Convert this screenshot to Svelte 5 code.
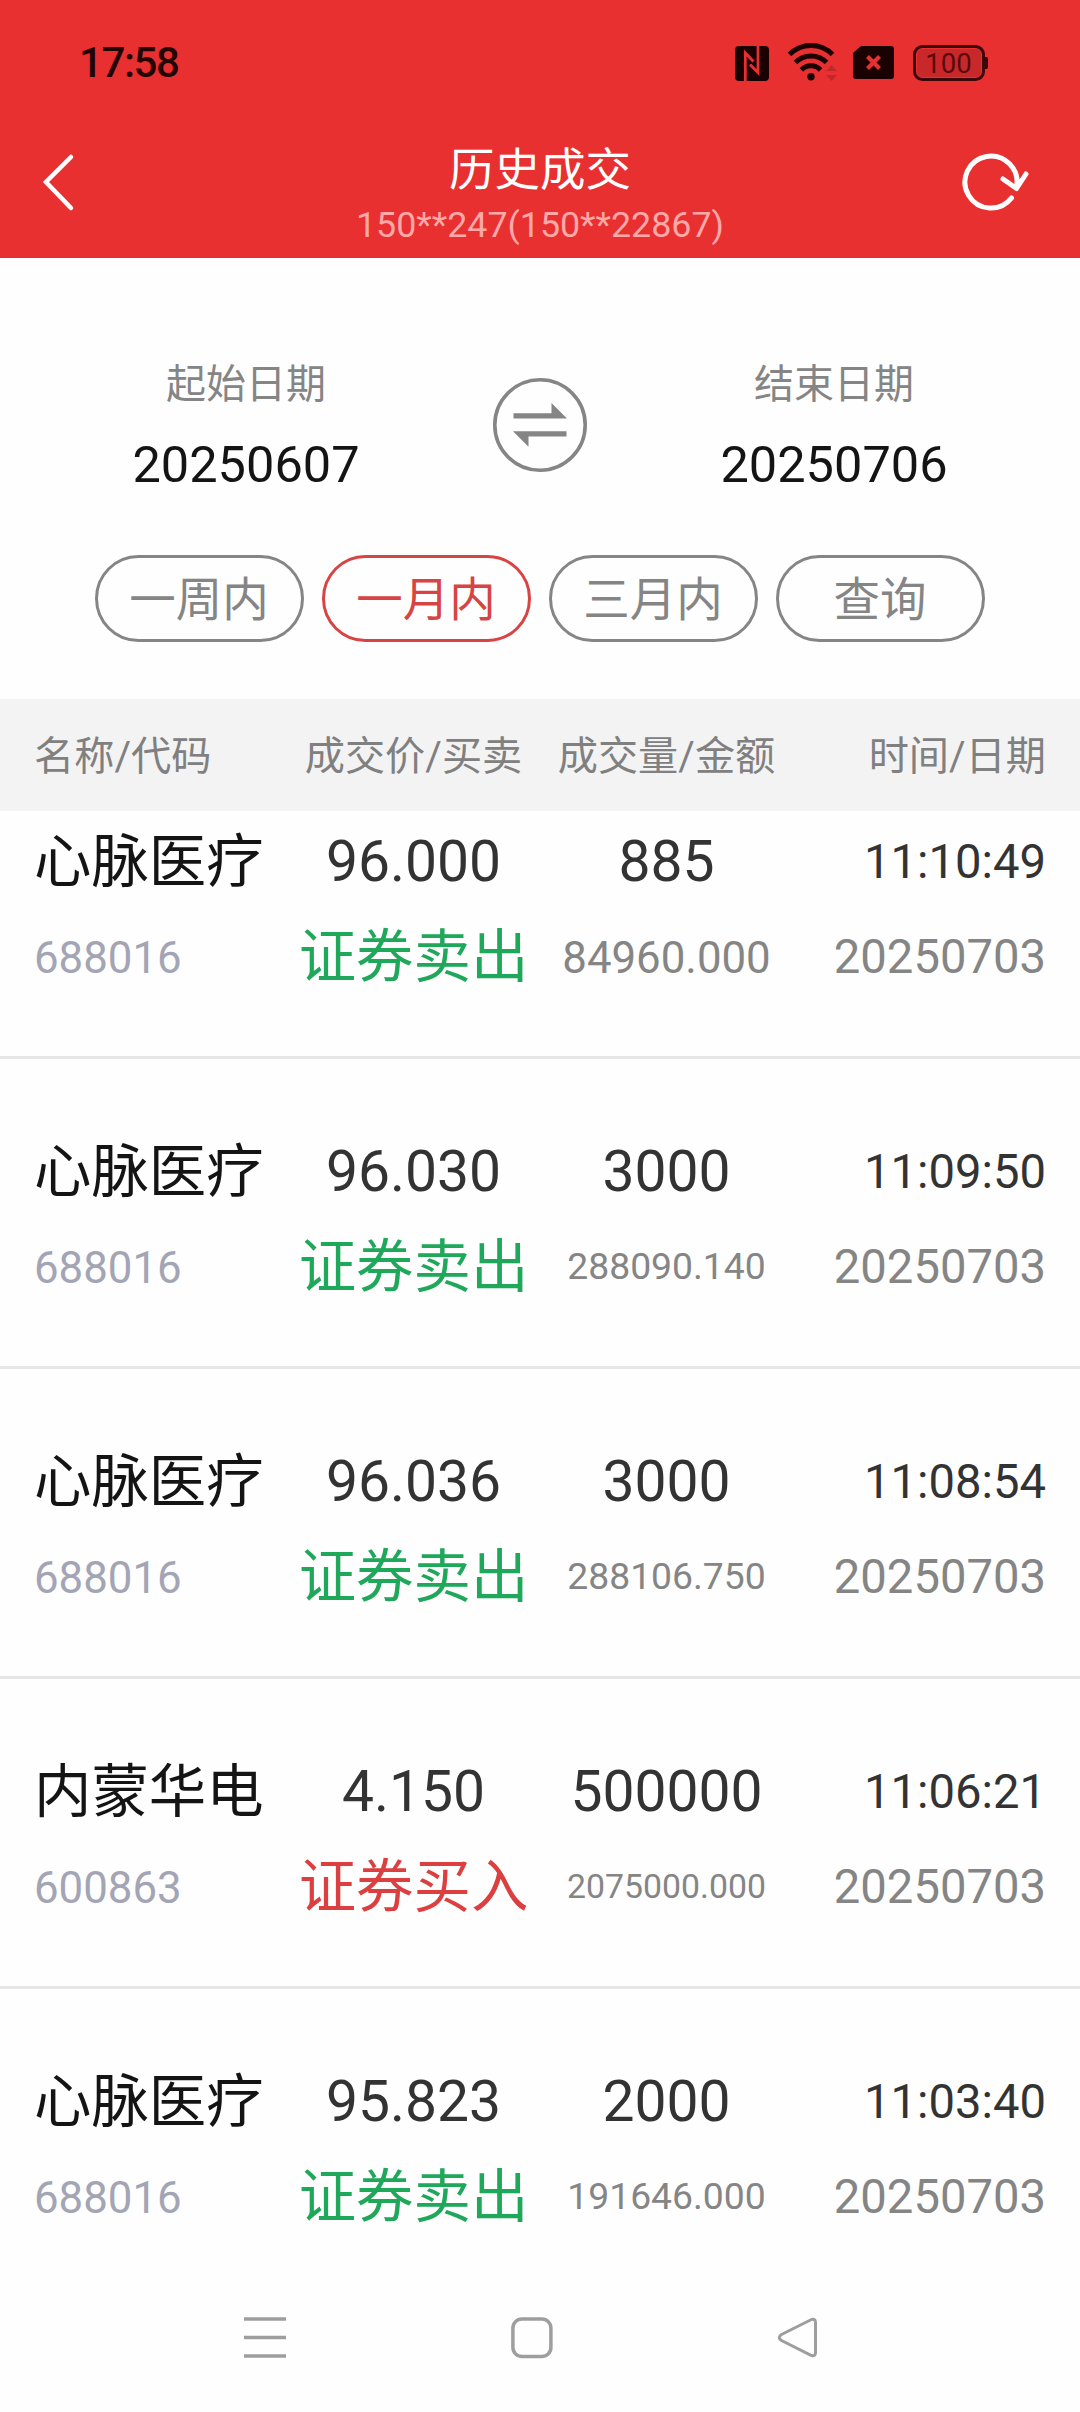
<script>
  let activeRange = '一月内';

  const ranges = ['一周内', '一月内', '三月内', '查询'];

  const columns = ['名称/代码', '成交价/买卖', '成交量/金额', '时间/日期'];

  const trades = [
    { name: '心脉医疗', code: '688016', price: '96.000', side: 'sell', volume: '885', amount: '84960.000', time: '11:10:49', date: '20250703' },
    { name: '心脉医疗', code: '688016', price: '96.030', side: 'sell', volume: '3000', amount: '288090.140', time: '11:09:50', date: '20250703' },
    { name: '心脉医疗', code: '688016', price: '96.036', side: 'sell', volume: '3000', amount: '288106.750', time: '11:08:54', date: '20250703' },
    { name: '内蒙华电', code: '600863', price: '4.150', side: 'buy', volume: '500000', amount: '2075000.000', time: '11:06:21', date: '20250703' },
    { name: '心脉医疗', code: '688016', price: '95.823', side: 'sell', volume: '2000', amount: '191646.000', time: '11:03:40', date: '20250703' }
  ];

  // long amounts shrink so they stay inside their column
  const amountSize = (amount) => {
    if (amount.length > 10) return 'small';
    if (amount.length > 9) return 'medium';
    return '';
  };
</script>

<div class="app">
  <header>
    <div class="status-bar">
      <span class="clock">17:58</span>
      <svg width="254" height="40" viewBox="735 41 254 40">
        <rect x="735" y="45" width="34" height="35" rx="4" fill="#1a0203" />
        <path d="M745.300 80V52L753.500 60.500M758 45V71.500L750 63.500" fill="none" stroke="#e83031" stroke-width="2.800" />
        <g fill="none" stroke="#1a0203" stroke-width="5">
          <path d="M789.500 53.500a30 30 0 0 1 43 0" />
          <path d="M795.500 61.500a21.500 21.500 0 0 1 31 0" />
          <path d="M801.500 69a13 13 0 0 1 19 0" />
        </g>
        <circle cx="811" cy="75.800" r="3.700" fill="#1a0203" />
        <path d="M826 70l5.500-6 5.500 6zM826 74h11l-5.500 6z" fill="#c2282a" />
        <path d="M861 45h30a3 3 0 0 1 3 3v27a3 3 0 0 1-3 3h-35a3 3 0 0 1-3-3V52z" fill="#1a0203" />
        <path d="M867.500 55.500l12 12M879.500 55.500l-12 12" stroke="#e83031" stroke-width="4.200" />
        <rect x="914.500" y="45.500" width="69" height="33" rx="8" fill="none" stroke="#3c0507" stroke-width="3" />
        <rect x="917" y="48" width="64" height="28" rx="5" fill="#c9282a" />
        <path d="M985 56h1.500q1.500 0 1.500 2v8q0 2-1.500 2H985z" fill="#3c0507" />
        <text x="948.500" y="72" text-anchor="middle" font-size="27.500" fill="#5a0a0c">100</text>
      </svg>
    </div>
    <div class="title-bar">
      <svg class="back" width="36" height="62" viewBox="0 0 36 62">
        <path d="M31 6L6 31l25 26" fill="none" stroke="#fff" stroke-width="4.500" stroke-linecap="round" />
      </svg>
      <div class="title">
        <h1>历史成交</h1>
        <p>150**247(150**22867)</p>
      </div>
      <svg width="68" height="62" viewBox="962 152 68 62">
        <path d="M1011.500 199a26 26 0 1 1 5-11M1003 180l13.500 9.500L1026 175" fill="none" stroke="#fff" stroke-width="5" stroke-linecap="round" stroke-linejoin="round" />
      </svg>
    </div>
  </header>

  <section class="filter">
    <div class="dates">
      <div class="date">
        <span class="label">起始日期</span>
        <span class="value">20250607</span>
      </div>
      <svg width="96" height="96" viewBox="492 377 96 96">
        <circle cx="540" cy="425" r="45.200" fill="none" stroke="#858585" stroke-width="3.600" />
        <path d="M513.500 413.300h38v-10.300l15.500 15.500h-53.500zM566.500 436.500h-38v10.300L513 431.300h53.500z" fill="#858585" />
      </svg>
      <div class="date">
        <span class="label">结束日期</span>
        <span class="value">20250706</span>
      </div>
    </div>
    <div class="ranges">
      {#each ranges as range}
        <button class:active={range === activeRange} on:click={() => (activeRange = range)}>{range}</button>
      {/each}
    </div>
  </section>

  <div class="row head">
    {#each columns as column}
      <span>{column}</span>
    {/each}
  </div>

  <main>
    {#each trades as trade}
      <div class="row trade">
        <div class="cell">
          <span class="name">{trade.name}</span>
          <span class="code">{trade.code}</span>
        </div>
        <div class="cell">
          <span class="number">{trade.price}</span>
          <span class="side {trade.side}">{trade.side === 'sell' ? '证券卖出' : '证券买入'}</span>
        </div>
        <div class="cell">
          <span class="number">{trade.volume}</span>
          <span class="amount {amountSize(trade.amount)}">{trade.amount}</span>
        </div>
        <div class="cell">
          <span class="time">{trade.time}</span>
          <span class="day">{trade.date}</span>
        </div>
      </div>
    {/each}
  </main>

  <nav>
    <svg width="42" height="42" viewBox="0 0 42 42">
      <path d="M0 2h42M0 20.500h42M0 39h42" stroke="#9e9e9e" stroke-width="3.500" />
    </svg>
    <svg width="42" height="42" viewBox="0 0 42 42">
      <rect x="1.900" y="2" width="38" height="37.500" rx="9" fill="none" stroke="#9e9e9e" stroke-width="3.500" />
    </svg>
    <svg width="42" height="42" viewBox="0 0 42 42">
      <path d="M34.500 2.500L4.500 17.500q-4.500 3 0 6L34.500 38.500q4 1 4-3V5.500q0-4-4-3z" fill="none" stroke="#9e9e9e" stroke-width="3" />
    </svg>
  </nav>
</div>

<style>
  :global(body) {
    margin: 0;
    background: #fefefe;
  }

  .app {
    display: flex;
    flex-direction: column;
    width: 1080px;
    height: 2412px;
    overflow: hidden;
    font-family: Roboto, "Noto Sans CJK SC", sans-serif;
    background: #fefefe;
  }

  header {
    height: 258px;
    flex: none;
    background: #e83031;
  }

  .status-bar {
    display: flex;
    justify-content: space-between;
    align-items: center;
    height: 80px;
    padding: 22px 91px 0 79px;
  }

  .clock {
    font-size: 42px;
    font-weight: 500;
    letter-spacing: -1.4px;
    color: #240304;
  }

  .title-bar {
    display: grid;
    grid-template-columns: 68px 1fr 68px;
    align-items: center;
    height: 156px;
    padding: 2px 50px 0;
  }

  .back {
    margin-left: -10px;
  }

  .title {
    padding-top: 27px;
    text-align: center;
    color: #fff;
  }

  h1 {
    margin: 0;
    font-size: 45.500px;
    font-weight: 400;
    line-height: 59px;
  }

  p {
    margin: 0;
    font-size: 35.800px;
    line-height: 50px;
    color: #ffa8a8;
  }

  .filter {
    flex: none;
    height: 441px;
    box-sizing: border-box;
    padding: 96px 94px 0;
  }

  .dates {
    display: flex;
    justify-content: space-between;
    align-items: center;
    height: 142px;
    padding: 0 37px;
  }

  .date {
    display: flex;
    flex-direction: column;
    align-items: center;
    width: 230px;
  }

  .label {
    font-size: 40px;
    line-height: 56px;
    color: #858585;
  }

  .value {
    margin-top: 18px;
    margin-bottom: -6px;
    font-size: 50.500px;
    line-height: 68px;
    color: #141414;
  }

  .ranges {
    display: flex;
    justify-content: center;
    gap: 18px;
    margin-top: 59px;
  }

  button {
    width: 209px;
    height: 87px;
    padding: 0 1px 7px 0;
    border: 3px solid #858585;
    border-radius: 44px;
    background: none;
    font-family: inherit;
    font-size: 46.500px;
    color: #858585;
  }

  button.active {
    border-color: #d84343;
    color: #d84343;
  }

  .row {
    display: grid;
    grid-template-columns: repeat(4, 1fr);
    padding: 0 34px;
    text-align: center;
    white-space: nowrap;
  }

  .row > :first-child {
    text-align: left;
  }

  .row > :last-child {
    text-align: right;
  }

  .head {
    flex: none;
    height: 112px;
    line-height: 115px;
    font-size: 40.200px;
    color: #808080;
    background: #f3f3f3;
  }

  main {
    flex: 1;
    min-height: 0;
    overflow: hidden;
  }

  .trade {
    box-sizing: border-box;
    height: 310px;
    padding-top: 64px;
    border-bottom: 3px solid #e6e6e6;
  }

  /* the list is scrolled a little under the column heads */
  .trade:first-child {
    margin-top: -62px;
  }

  .cell span {
    display: block;
    height: 97px;
    line-height: 97px;
  }

  .cell .name {
    font-size: 57.400px;
    line-height: 99px;
    color: #141414;
  }

  .code {
    font-size: 43.800px;
    color: #a3a5b5;
  }

  .number {
    font-size: 57px;
    color: #333;
  }

  .cell .side {
    font-size: 57.400px;
    line-height: 96px;
  }

  .sell {
    color: #1fa75a;
  }

  .buy {
    color: #dc3f3f;
  }

  .amount {
    font-size: 43.800px;
    color: #858585;
  }

  .cell .medium {
    font-size: 37.300px;
    line-height: 93px;
  }

  .cell .small {
    font-size: 33.800px;
    line-height: 94px;
  }

  .cell .time {
    font-size: 47.200px;
    line-height: 99px;
    color: #333;
  }

  .cell .day {
    font-size: 47.200px;
    line-height: 95px;
    color: #858585;
  }

  nav {
    display: flex;
    flex: none;
    justify-content: space-between;
    align-items: center;
    box-sizing: border-box;
    height: 132px;
    padding: 0 261px 17px 244px;
    background: #fefefe;
  }
</style>
